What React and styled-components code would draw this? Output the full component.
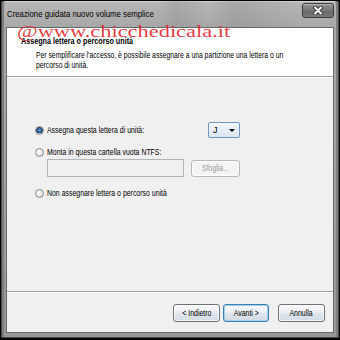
import React from "react";
import styled, { createGlobalStyle } from "styled-components";

const GlobalStyle = createGlobalStyle`
  html, body {
    margin: 0;
    padding: 0;
    background: #000;
  }
  body {
    font-family: "Liberation Sans", Arial, sans-serif;
    color: #000;
  }
`;

/* Testo compresso in orizzontale, come nello screenshot ridimensionato */
const Squeeze = styled.span`
  display: inline-block;
  white-space: nowrap;
  transform: scaleX(${(p) => p.$sx || 0.77});
  transform-origin: ${(p) => p.$origin || "left"} center;
`;

const Screen = styled.div`
  position: relative;
  width: 340px;
  height: 340px;
  box-sizing: border-box;
  padding: 1px 1px 2px 1px;
  background: #000;
  overflow: hidden;
`;

const Window = styled.div`
  height: 100%;
  box-sizing: border-box;
  display: flex;
  flex-direction: column;
  padding: 0 6px 6px 6px;
  border-radius: 4px 4px 0 0;
  background: linear-gradient(to bottom, #b6b6b6 0, #a8a8a8 27px, #979797 100%);
  box-shadow: inset 1px 0 0 #4a4a4a, inset -1px 0 0 #4a4a4a, inset 0 -1px 0 #4a4a4a,
    inset 0 1px 0 #d0d0d0, inset 3px 0 0 #7d7d7d, inset -3px 0 0 #7d7d7d;
`;

const TitleBar = styled.div`
  height: 27px;
  display: flex;
  align-items: flex-start;
  flex-shrink: 0;
  background: linear-gradient(
    to right,
    transparent 0,
    transparent 150px,
    rgba(110, 110, 110, 0.18) 170px,
    transparent 200px,
    rgba(110, 110, 110, 0.2) 230px,
    transparent 290px
  );
`;

const TitleText = styled.div`
  margin-top: 7px;
  font-size: 9.5px;
  line-height: 12px;
  color: #000;
`;

const CloseButton = styled.div`
  margin: 2px -1px 0 auto;
  width: 32px;
  height: 15px;
  box-sizing: border-box;
  border: 1px solid #3a3a3a;
  border-radius: 3px;
  background: linear-gradient(to bottom, #929292 0, #777 50%, #686868 51%, #7a7a7a 100%);
  box-shadow: inset 0 1px 0 rgba(255, 255, 255, 0.35);
  display: flex;
  align-items: center;
  justify-content: center;
`;

const Content = styled.div`
  flex: 1;
  display: flex;
  flex-direction: column;
  background: #f0f0f0;
  box-shadow: 0 0 0 1px #6a6a6a;
`;

const Header = styled.div`
  height: 49px;
  box-sizing: border-box;
  flex-shrink: 0;
  background: #fff;
  border-bottom: 1px solid #a0a0a0;
  padding: 8px 0 0 14px;
  font-size: 9px;
  line-height: 10px;
`;

const HeaderTitle = styled.div`
  font-weight: bold;
`;

const HeaderDesc = styled.div`
  margin: 4px 0 0 15px;
`;

const Body = styled.div`
  flex: 1;
  display: flex;
  flex-direction: column;
  padding: 45px 93px 0 28px;
  font-size: 9px;
  box-shadow: inset 0 1px 0 #fff;
`;

const OptionRow = styled.div`
  display: flex;
  align-items: center;
  height: ${(p) => p.$h || 12}px;
  margin-top: ${(p) => p.$mt || 0}px;
  line-height: ${(p) => p.$h || 12}px;
`;

const Radio = styled.span`
  width: 9px;
  height: 9px;
  box-sizing: border-box;
  border-radius: 50%;
  border: 1px solid #8a8c8e;
  background: ${(p) =>
    p.$checked
      ? "radial-gradient(circle at 50% 45%, #7fb1dc 0, #1d4f86 45%, #17385e 60%, #e9eaeb 66%, #d4d5d6 100%)"
      : "radial-gradient(circle at 40% 35%, #ffffff 0, #e6e7e8 50%, #c9cbcd 100%)"};
  margin-right: 3px;
  flex-shrink: 0;
`;

const Dropdown = styled.div`
  margin-left: auto;
  width: 32px;
  height: 16px;
  box-sizing: border-box;
  border: 1px solid #7096be;
  border-radius: 2px;
  background: linear-gradient(to bottom, #f4f8fb 0, #e6eef5 50%, #dbe6f0 100%);
  display: flex;
  align-items: center;
  padding: 0 4px 0 4px;
  font-size: 9px;
`;

const Arrow = styled.span`
  margin-left: auto;
  width: 0;
  height: 0;
  border-left: 3px solid transparent;
  border-right: 3px solid transparent;
  border-top: 3px solid #000;
`;

const FolderRow = styled.div`
  display: flex;
  align-items: center;
  height: 18px;
  margin: 1px 0 0 12px;
`;

const PathField = styled.div`
  width: 137px;
  height: 18px;
  box-sizing: border-box;
  border: 1px solid #b2b4b7;
  background: #f0f0f0;
`;

const Button = styled.div`
  width: ${(p) => p.$w || 47}px;
  height: ${(p) => p.$h || 18}px;
  box-sizing: border-box;
  border: 1px solid ${(p) => (p.$default ? "#3c7fb1" : p.$disabled ? "#b5b9bd" : "#707070")};
  border-radius: 3px;
  background: ${(p) =>
    p.$disabled
      ? "#f4f4f4"
      : "linear-gradient(to bottom, #f6f7f9 0, #eceff3 45%, #dde4ec 55%, #d3dce6 100%)"};
  box-shadow: ${(p) => (p.$default ? "inset 0 0 0 1px #9fd0ef" : "inset 0 0 0 1px rgba(255,255,255,0.7)")};
  color: ${(p) => (p.$disabled ? "#9a9a9a" : "#000")};
  display: flex;
  align-items: center;
  justify-content: center;
  font-size: 9px;
  margin-left: ${(p) => p.$ml || 0}px;
`;

const Footer = styled.div`
  height: 41px;
  box-sizing: border-box;
  flex-shrink: 0;
  border-top: 1px solid #a0a0a0;
  box-shadow: inset 0 1px 0 #fff;
  display: flex;
  justify-content: flex-end;
  align-items: flex-start;
  padding: 12px 8px 0 0;
`;

const Watermark = styled.div`
  position: absolute;
  top: 24px;
  left: 17px;
  font-family: "Liberation Serif", "Times New Roman", serif;
  font-size: 16px;
  line-height: 16px;
  color: rgba(232, 28, 44, 0.88);
  white-space: nowrap;
  transform: scaleX(1.4);
  transform-origin: left center;
  pointer-events: none;
`;

const CloseIcon = () => (
  <svg width="10" height="9" viewBox="0 0 10 9">
    <path d="M2 1.5 L8 7.5 M8 1.5 L2 7.5" stroke="#2e2e2e" strokeWidth="3.6" strokeLinecap="round" />
    <path d="M2 1.5 L8 7.5 M8 1.5 L2 7.5" stroke="#fff" strokeWidth="2" strokeLinecap="round" />
  </svg>
);

const App = () => (
  <>
    <GlobalStyle />
    <Screen>
      <Window>
        <TitleBar>
          <TitleText>
            <Squeeze $sx={0.82}>Creazione guidata nuovo volume semplice</Squeeze>
          </TitleText>
          <CloseButton>
            <CloseIcon />
          </CloseButton>
        </TitleBar>

        <Content>
          <Header>
            <HeaderTitle>
              <Squeeze $sx={0.8}>Assegna lettera o percorso unità</Squeeze>
            </HeaderTitle>
            <HeaderDesc>
              <div>
                <Squeeze $sx={0.755}>
                  Per semplificare l'accesso, è possibile assegnare a una partizione una lettera o un
                </Squeeze>
              </div>
              <div>
                <Squeeze $sx={0.755}>percorso di unità.</Squeeze>
              </div>
            </HeaderDesc>
          </Header>

          <Body>
            <OptionRow $h={16}>
              <Radio $checked />
              <Squeeze>Assegna questa lettera di unità:</Squeeze>
              <Dropdown>
                <span>J</span>
                <Arrow />
              </Dropdown>
            </OptionRow>

            <OptionRow $mt={8}>
              <Radio />
              <Squeeze>Monta in questa cartella vuota NTFS:</Squeeze>
            </OptionRow>

            <FolderRow>
              <PathField />
              <Button $w={49} $h={17} $ml={7} $disabled>
                <Squeeze $origin="center">Sfoglia...</Squeeze>
              </Button>
            </FolderRow>

            <OptionRow $mt={10}>
              <Radio />
              <Squeeze>Non assegnare lettera o percorso unità</Squeeze>
            </OptionRow>
          </Body>

          <Footer>
            <Button $w={47}>
              <Squeeze $origin="center">&lt; Indietro</Squeeze>
            </Button>
            <Button $w={46} $ml={3} $default>
              <Squeeze $origin="center">Avanti &gt;</Squeeze>
            </Button>
            <Button $w={47} $ml={9}>
              <Squeeze $origin="center">Annulla</Squeeze>
            </Button>
          </Footer>
        </Content>
      </Window>
      <Watermark>@www.chicchedicala.it</Watermark>
    </Screen>
  </>
);

export default App;
